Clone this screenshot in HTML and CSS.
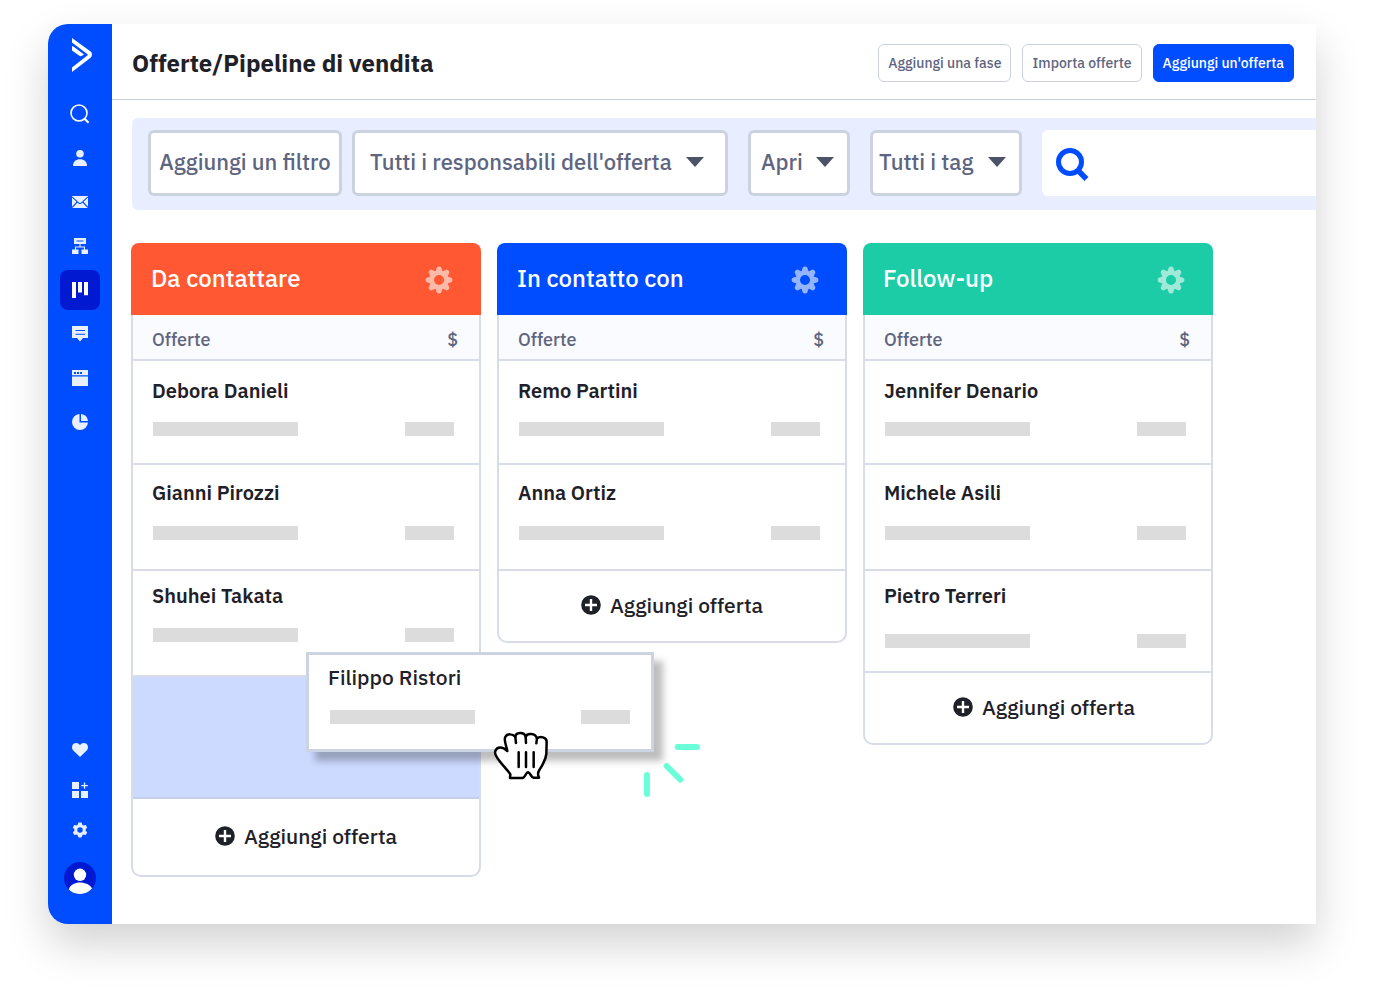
FILE: index.html
```html
<!DOCTYPE html>
<html lang="it">
<head>
  <meta charset="UTF-8" />
  <meta name="viewport" content="width=device-width, initial-scale=1.0" />
  <title>Offerte/Pipeline di vendita</title>
  <link rel="stylesheet" href="styles.css">
</head>
<body>
  <!-- shared icons -->
  <svg class="sprite" aria-hidden="true">
    <symbol id="gear" viewBox="-14 -14 28 28">
      <circle r="7.2" fill="none" stroke="currentColor" stroke-width="4.4" />
      <g fill="currentColor">
        <path id="tooth" d="M-3.6-8.5L-2.3-12.2Q-1.8-13.4 0-13.4T2.3-12.2L3.6-8.5L0-7.5Z" />
        <use href="#tooth" transform="rotate(45)" />
        <use href="#tooth" transform="rotate(90)" />
        <use href="#tooth" transform="rotate(135)" />
        <use href="#tooth" transform="rotate(180)" />
        <use href="#tooth" transform="rotate(225)" />
        <use href="#tooth" transform="rotate(270)" />
        <use href="#tooth" transform="rotate(315)" />
      </g>
    </symbol>
    <symbol id="plus" viewBox="0 0 20 20">
      <circle cx="10" cy="10" r="9.8" fill="currentColor" />
      <path d="M10 4v12M4 10h12" stroke="#fff" stroke-width="2.4" />
    </symbol>
    <symbol id="caret" viewBox="0 0 18 10">
      <path d="M0 0h18L9 10z" fill="currentColor" />
    </symbol>
  </svg>

  <div class="app">
    <nav class="sidebar">
      <a href="#" class="logo" aria-label="Home">
        <svg width="20" height="34" viewBox="0 0 20 34" fill="#fff">
          <path d="M0 0L18.6 13.6Q20 14.8 20 16.6T18.6 19.8L0 34V29.4L15.6 17.2Q16 16.7 15.5 16.3L0 4.6Z" />
          <path d="M0 8.4Q1.2 8.2 2.4 9.2L12 16.4L10 17.8Q8.6 18.6 7 17.5L0 12.4Z" />
        </svg>
      </a>
      <a href="#" class="nav-item" aria-label="Cerca">
        <svg width="20" height="20" viewBox="0 0 20 20" fill="none" stroke="#fff" stroke-width="1.6">
          <circle cx="9" cy="9" r="8" /><path d="M14.5 14.8L18.6 18.8" stroke-width="2.2" />
        </svg>
      </a>
      <a href="#" class="nav-item" aria-label="Contatti">
        <svg width="16" height="16" viewBox="0 0 16 16" fill="currentColor">
          <circle cx="8" cy="3.8" r="3.8" /><path d="M1 16C1 11.5 3.8 9.2 8 9.2S15 11.5 15 16Z" />
        </svg>
      </a>
      <a href="#" class="nav-item" aria-label="Campagne">
        <svg width="16" height="12" viewBox="0 0 16 12">
          <path fill="currentColor" d="M0 0h16v12H0z" />
          <path d="M0 .8L6.2 6.7Q8 8.3 9.8 6.7L16 .8M0 11.5L5.2 6M16 11.5L10.8 6" fill="none" stroke="#004cff" stroke-width="1.1" />
        </svg>
      </a>
      <a href="#" class="nav-item" aria-label="Automazioni">
        <svg width="16" height="16" viewBox="0 0 16 16">
          <path fill="currentColor" d="M2 0h12v6H2zM0 11.5h6.5V16H0zM9.5 11.5H16V16H9.5z" />
          <path d="M8 6v3M3.5 12V9h9v3" fill="none" stroke="currentColor" stroke-width="1.1" />
          <path d="M4.5 3h7" stroke="#6699ff" stroke-width="1.8" />
        </svg>
      </a>
      <a href="#" class="nav-item active" aria-label="Offerte">
        <svg width="16" height="16" viewBox="0 0 16 16" fill="#fff">
          <path d="M0 0h4v16H0zM6 0h4v10.5H6zM12 0h4v13.3h-4z" />
        </svg>
      </a>
      <a href="#" class="nav-item" aria-label="Conversazioni">
        <svg width="16" height="16" viewBox="0 0 16 16">
          <path fill="currentColor" d="M0 0h16v12h-5L8 15.5 5 12H0z" />
          <path d="M3.5 4.5h9.5M3.5 8.2h9.5" stroke="#004cff" stroke-width="1.1" />
        </svg>
      </a>
      <a href="#" class="nav-item" aria-label="Sito web">
        <svg width="16" height="16" viewBox="0 0 16 16">
          <path fill="currentColor" d="M0 0h16v5.3H0zM0 6.5h16V16H0z" />
          <path d="M2 3h8" stroke="#004cff" stroke-width="1.8" stroke-dasharray="2 1" />
        </svg>
      </a>
      <a href="#" class="nav-item" aria-label="Report">
        <svg width="16" height="16" viewBox="0 0 16 16" fill="currentColor">
          <path d="M7.5 0V8.5H16A8 8 0 1 1 7.5 0Z" /><path d="M9 0A8 8 0 0 1 16 7H9Z" />
        </svg>
      </a>

      <div class="nav-bottom">
        <a href="#" class="nav-item" aria-label="Preferiti">
          <svg width="16" height="14" viewBox="0 0 16 14" fill="currentColor">
            <path d="M8 14L1.3 7.6C-.4 5.8-.4 2.7 1.3 1.1C3.3-.6 6.5-.3 8 2.2C9.5-.3 12.7-.6 14.7 1.1C16.4 2.7 16.4 5.8 14.7 7.6Z" />
          </svg>
        </a>
        <a href="#" class="nav-item" aria-label="App">
          <svg width="16" height="16" viewBox="0 0 16 16" fill="currentColor">
            <path d="M0 0h7v7H0zM0 9h7v7H0zM9 9h7v7H9zM11.9.5h1.3v2.5h2.6v1.3h-2.6v2.5h-1.3V4.3H9.3V3h2.6z" />
          </svg>
        </a>
        <a href="#" class="nav-item" aria-label="Impostazioni">
          <svg width="16" height="16" viewBox="-8 -8 16 16" fill="currentColor">
            <circle r="4.2" fill="none" stroke="currentColor" stroke-width="3" />
            <path id="cog" d="M-2.4-5L-1.5-7.4h3L2.4-5Z" />
            <use href="#cog" transform="rotate(60)" />
            <use href="#cog" transform="rotate(120)" />
            <use href="#cog" transform="rotate(180)" />
            <use href="#cog" transform="rotate(240)" />
            <use href="#cog" transform="rotate(300)" />
          </svg>
        </a>
        <a href="#" class="avatar" aria-label="Profilo">
          <svg width="32" height="32" viewBox="0 0 32 32">
            <circle cx="16" cy="16" r="16" fill="#0019d1" />
            <circle cx="16" cy="12.8" r="6.2" fill="#fff" />
            <path d="M4.8 27.4C6 22.5 11 20.4 16 20.4S26.5 22.5 28 26.6A16 16 0 0 1 4.8 27.4Z" fill="#fff" />
          </svg>
        </a>
      </div>
    </nav>

    <main class="main">
      <header class="topbar">
        <h1>Offerte/Pipeline di vendita</h1>
        <div class="actions">
          <button type="button" class="btn">Aggiungi una fase</button>
          <button type="button" class="btn">Importa offerte</button>
          <button type="button" class="btn btn-primary">Aggiungi un'offerta</button>
        </div>
      </header>

      <form class="filters">
        <div class="filter-group">
          <button type="button" class="filter filter-add">Aggiungi un filtro</button>
          <div class="select select-owner">
            <select class="filter" aria-label="Responsabile">
              <option>Tutti i responsabili dell'offerta</option>
            </select>
            <svg class="caret"><use href="#caret" /></svg>
          </div>
        </div>
        <div class="select select-status">
          <select class="filter" aria-label="Stato">
            <option>Apri</option>
          </select>
          <svg class="caret"><use href="#caret" /></svg>
        </div>
        <div class="select select-tag">
          <select class="filter" aria-label="Tag">
            <option>Tutti i tag</option>
          </select>
          <svg class="caret"><use href="#caret" /></svg>
        </div>
        <label class="search">
          <svg width="34" height="34" viewBox="0 0 34 34" fill="none" stroke="#004cff" stroke-width="5">
            <circle cx="14" cy="14" r="11.5" /><path d="M22 22.5L30.5 31" stroke-width="5.5" />
          </svg>
          <input type="search" aria-label="Cerca offerte">
        </label>
      </form>

      <div class="board">
        <section class="column">
          <header class="column-header orange">
            <h2>Da contattare</h2>
            <svg class="gear"><use href="#gear" /></svg>
          </header>
          <div class="column-body">
            <div class="column-sub"><span>Offerte</span><span>$</span></div>
            <article class="card">
              <h3>Debora Danieli</h3>
              <div class="bars"><i class="bar"></i><i class="bar bar-short"></i></div>
            </article>
            <article class="card">
              <h3>Gianni Pirozzi</h3>
              <div class="bars"><i class="bar"></i><i class="bar bar-short"></i></div>
            </article>
            <article class="card">
              <h3>Shuhei Takata</h3>
              <div class="bars"><i class="bar"></i><i class="bar bar-short"></i></div>
            </article>
            <div class="dropzone">
              <article class="dragged">
                <h3>Filippo Ristori</h3>
                <div class="bars"><i class="bar"></i><i class="bar bar-short"></i></div>
                <svg class="hand" viewBox="39 273 168 147" fill="#fff" stroke="#000" stroke-width="7.5" stroke-linecap="round" stroke-linejoin="round">
                  <path d="M90 414L91 403C88 396 70 379 58 362C50 352 42 342 46 333C51 319 68 319 82 333C80 320 70 300 76 291C82 280 98 281 106 291C107 276 132 275 137 290C142 278 166 279 171 295C180 288 200 291 200 305L199 342C197 360 186 378 178 390C173 398 173 405 177 413L160 413C153 411 151 398 144 397C137 397 137 412 128 414Z" />
                  <path d="M106 291L108 309M137 290L138 309M171 295L169 310M116 337V381M138 337V381M161 337V381" fill="none" />
                </svg>
                <svg class="spark" viewBox="489 309 174 165" fill="none" stroke="#6bffd9" stroke-width="18" stroke-linecap="round">
                  <path d="M593 321H651M560 378L601 419M501 405V462" />
                </svg>
              </article>
            </div>
            <button type="button" class="add"><svg><use href="#plus" /></svg>Aggiungi offerta</button>
          </div>
        </section>

        <section class="column">
          <header class="column-header blue">
            <h2>In contatto con</h2>
            <svg class="gear"><use href="#gear" /></svg>
          </header>
          <div class="column-body">
            <div class="column-sub"><span>Offerte</span><span>$</span></div>
            <article class="card">
              <h3>Remo Partini</h3>
              <div class="bars"><i class="bar"></i><i class="bar bar-short"></i></div>
            </article>
            <article class="card">
              <h3>Anna Ortiz</h3>
              <div class="bars"><i class="bar"></i><i class="bar bar-short"></i></div>
            </article>
            <button type="button" class="add"><svg><use href="#plus" /></svg>Aggiungi offerta</button>
          </div>
        </section>

        <section class="column">
          <header class="column-header green">
            <h2>Follow-up</h2>
            <svg class="gear"><use href="#gear" /></svg>
          </header>
          <div class="column-body">
            <div class="column-sub"><span>Offerte</span><span>$</span></div>
            <article class="card">
              <h3>Jennifer Denario</h3>
              <div class="bars"><i class="bar"></i><i class="bar bar-short"></i></div>
            </article>
            <article class="card">
              <h3>Michele Asili</h3>
              <div class="bars"><i class="bar"></i><i class="bar bar-short"></i></div>
            </article>
            <article class="card card-last">
              <h3>Pietro Terreri</h3>
              <div class="bars"><i class="bar"></i><i class="bar bar-short"></i></div>
            </article>
            <button type="button" class="add"><svg><use href="#plus" /></svg>Aggiungi offerta</button>
          </div>
        </section>
      </div>
    </main>
  </div>
</body>
</html>
```
FILE: styles.css
```css
* {
  box-sizing: border-box;
}
body {
  margin: 0;
  padding: 24px 60px 72px 48px;
  min-height: 100vh;
  display: flex;
  background: #fff;
  color: #1f2129;
  font-family: "IBM Plex Sans", Roboto, sans-serif;
}
h1, h2, h3 {
  margin: 0;
}
button, select, input {
  font-family: inherit;
  cursor: pointer;
}
.sprite {
  position: absolute;
  width: 0;
  height: 0;
}
.app {
  flex: 1;
  min-width: 0;
  display: flex;
  border-radius: 20px 0 0 20px;
  background: #fff;
  box-shadow: 0 20px 44px rgba(0, 0, 0, 0.18);
}

/* sidebar */
.sidebar {
  width: 64px;
  flex-shrink: 0;
  display: flex;
  flex-direction: column;
  align-items: center;
  gap: 4px;
  padding: 14px 0 30px;
  border-radius: 20px 0 0 20px;
  background: #004cff;
  color: #e8efff;
}
.logo {
  height: 52px;
  padding-left: 4px;
}
.nav-item {
  width: 40px;
  height: 40px;
  display: flex;
  align-items: center;
  justify-content: center;
  border-radius: 8px;
  color: inherit;
}
.nav-item.active {
  background: #0019d1;
}
.nav-bottom {
  margin-top: auto;
}
.avatar {
  display: block;
  width: 32px;
  height: 32px;
  margin: 12px auto 0;
}

/* top bar */
.main {
  flex: 1;
  min-width: 0;
}
.topbar {
  height: 76px;
  display: flex;
  align-items: center;
  justify-content: space-between;
  padding: 3px 22px 0 20px;
  border-bottom: 1px solid #c9cddb;
}
.topbar h1 {
  font-size: 24px;
  line-height: 32px;
}
.actions {
  display: flex;
  gap: 11px;
}
.btn {
  height: 38px;
  padding: 0 9px;
  border: 1px solid #ccd1e0;
  border-radius: 6px;
  background: #fff;
  color: #5e6580;
  font-size: 14px;
  font-weight: 500;
}
.btn-primary {
  border-color: #004cff;
  background: #004cff;
  color: #fff;
}

/* filters */
.filters {
  display: flex;
  gap: 20px;
  margin: 18px 0 0 20px;
  padding: 12px 0 14px 16px;
  border-radius: 6px 0 0 6px;
  background: #e8eeff;
}
.filter-group {
  display: flex;
  flex-shrink: 0;
  gap: 10px;
}
.filter {
  width: 100%;
  height: 66px;
  padding: 0 6px 4px;
  border: 3px solid #ccd3e0;
  border-radius: 6px;
  background: #fff;
  color: #5e6580;
  font-size: 22px;
  font-weight: 500;
  white-space: nowrap;
  appearance: none;
}
.filter-add {
  width: 194px;
}
.select {
  position: relative;
  flex-shrink: 0;
}
.caret {
  position: absolute;
  top: 27px;
  right: 16px;
  width: 18px;
  height: 10px;
  color: #4c5369;
  pointer-events: none;
}
.select-owner {
  width: 376px;
}
.select-owner .filter {
  padding-left: 15px;
}
.select-owner .caret {
  right: 24px;
}
.select-status {
  width: 102px;
}
.select-status .filter {
  padding-left: 10px;
}
.select-tag {
  width: 152px;
}
.search {
  flex: 1;
  min-width: 0;
  display: flex;
  align-items: center;
  gap: 12px;
  padding: 4px 0 0 14px;
  border-radius: 6px 0 0 6px;
  background: #fff;
}
.search svg {
  flex-shrink: 0;
}
.search input {
  flex: 1;
  min-width: 0;
  border: 0;
  outline: 0;
  background: none;
  font-size: 22px;
}

/* board */
.board {
  display: grid;
  grid-template-columns: repeat(3, 1fr);
  align-items: start;
  gap: 16px;
  padding: 33px 103px 46px 19px;
}
.column-header {
  height: 72px;
  display: flex;
  align-items: center;
  justify-content: space-between;
  padding: 2px 28px 0 20px;
  border-radius: 8px 8px 0 0;
  color: #fff;
}
.orange {
  background: #ff5833;
}
.blue {
  background: #004cff;
}
.green {
  background: #1bcca6;
}
.column-header h2 {
  padding-bottom: 4px;
  font-size: 24px;
  font-weight: 500;
  line-height: 32px;
}
.gear {
  width: 28px;
  height: 28px;
  opacity: 0.58;
}
.column-body {
  border: 2px solid #d8dce9;
  border-top: 0;
  border-radius: 0 0 10px 10px;
}
.column-sub {
  height: 46px;
  display: flex;
  align-items: center;
  justify-content: space-between;
  padding: 4px 21px 0 19px;
  border-bottom: 2px solid #d8dce9;
  background: #fafbff;
  color: #5e6580;
  font-size: 18px;
  font-weight: 500;
}
.card {
  height: 106px;
  padding: 16px 25px 0 19px;
  border-bottom: 2px solid #d8dce9;
}
.card h3 {
  font-size: 20px;
  font-weight: 600;
  line-height: 24px;
}
.bars {
  display: flex;
  justify-content: space-between;
  margin-top: 21px;
  padding-left: 1px;
}
.bar {
  width: 145px;
  height: 14px;
  background: #dcdcdc;
}
.bar-short {
  width: 49px;
}
.column-sub + .card {
  height: 104px;
  padding-top: 18px;
}
.column-sub + .card .bars {
  margin-top: 19px;
}
.card + .card + .card {
  padding-top: 13px;
}
.card + .card + .card .bars {
  margin-top: 20px;
}
.card + .card + .card-last {
  height: 102px;
}
.card + .card + .card-last .bars {
  margin-top: 26px;
}
.dropzone {
  position: relative;
  height: 122px;
  border-bottom: 2px solid #c5cfea;
  background: #ccdaff;
}
/* card being moved, floats over the board */
.dragged {
  position: absolute;
  z-index: 1;
  top: -25px;
  left: 50%;
  width: calc(100% + 2px);
  height: 100px;
  padding: 10px 21px 0 19px;
  border: 3px solid #ccd3e2;
  background: #fff;
  box-shadow: 9px 9px 7px rgba(0, 0, 0, 0.26);
}
.dragged h3 {
  font-size: 21px;
  font-weight: 500;
  line-height: 24px;
}
.dragged .bars {
  padding-left: 2px;
}
.hand {
  position: absolute;
  top: 76px;
  left: 184px;
  width: 56px;
  height: 49px;
}
.spark {
  position: absolute;
  top: 88px;
  left: 334px;
  width: 58px;
  height: 55px;
}
.add {
  width: 100%;
  height: 70px;
  display: flex;
  align-items: center;
  justify-content: center;
  gap: 9px;
  padding: 0 0 3px;
  border: 0;
  border-radius: 10px;
  background: none;
  color: #1f2129;
  font-size: 21px;
  font-weight: 500;
}
.dropzone + .add {
  height: 76px;
}
.card-last + .add {
  padding-left: 12px;
}
.add svg {
  width: 20px;
  height: 20px;
}
```
